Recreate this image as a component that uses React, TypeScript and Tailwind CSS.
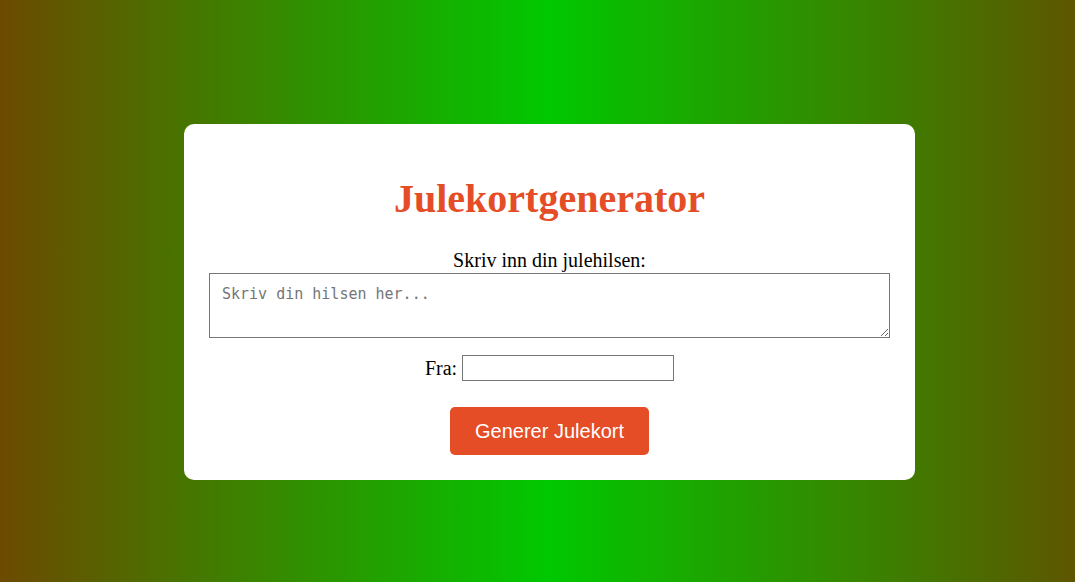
export default function App() {
  return (
    <div className="h-[582px] w-full overflow-hidden bg-[linear-gradient(90deg,#6c4a00_0%,#00c800_51%,#5e5600_100%)] pl-[184px] pt-[124px] font-['Liberation_Serif',serif]">
      {/* CARD */}
      <div className="flex h-[356px] w-[731px] flex-col items-center rounded-[10px] bg-white p-[25px] text-center text-[20px] text-black">
        <h1 className="my-[27px] text-[40px] font-bold leading-[46px] text-[#e44d26]">
          Julekortgenerator
        </h1>

        <label htmlFor="hilsen" className="block leading-[23px]">
          Skriv inn din julehilsen:
        </label>
        <textarea
          id="hilsen"
          placeholder="Skriv din hilsen her..."
          className="mt-[1px] block h-[65px] w-full border border-[#767676] bg-white p-[12px] font-['DejaVu_Sans_Mono',monospace] text-[15px] leading-[17px] text-black placeholder:text-[#757575]"
        />

        <div className="mt-[17px] flex items-center justify-center gap-[5px]">
          <label htmlFor="fra" className="leading-[23px]">Fra:</label>
          <input
            id="fra"
            type="text"
            className="h-[26px] w-[212px] border border-[#767676] bg-white px-[2px] font-['Liberation_Sans',sans-serif] text-[13px]"
          />
        </div>

        <button className="mt-[26px] rounded-[5px] bg-[#e44d26] px-[25px] py-[12px] font-['Liberation_Sans',Arial,sans-serif] text-[20px] leading-[24px] text-white">
          Generer Julekort
        </button>
      </div>
    </div>
  );
}
